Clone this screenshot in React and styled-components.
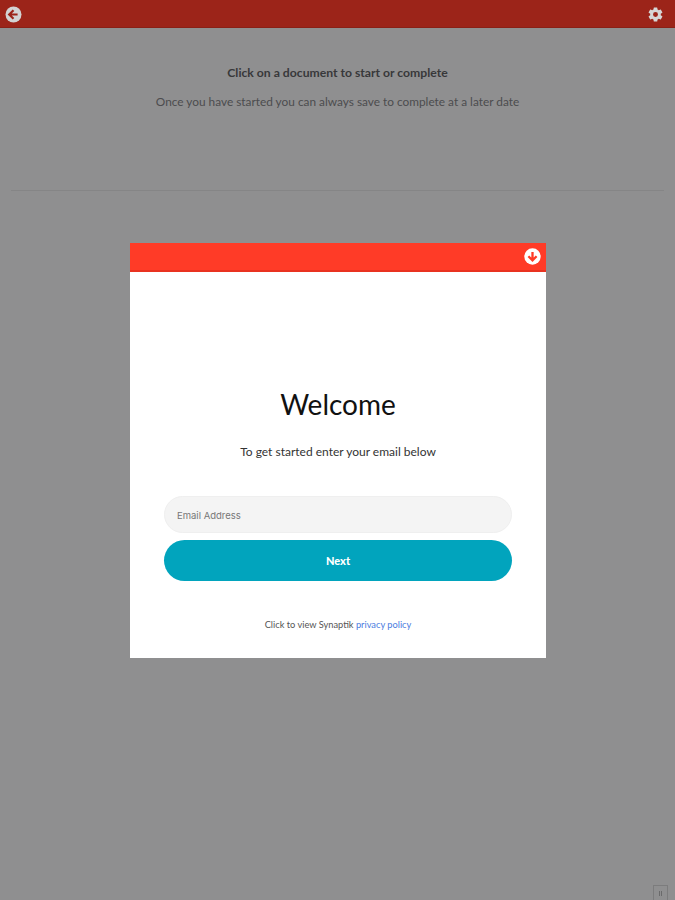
import React from "react";
import styled, { createGlobalStyle } from "styled-components";

const GlobalStyle = createGlobalStyle`
  html, body {
    margin: 0;
    padding: 0;
    background: #8f8f90;
    font-family: Lato, "Liberation Sans", sans-serif;
  }
`;

const Page = styled.div`
  position: relative;
  width: 675px;
  height: 900px;
  overflow: hidden;
  background: #8f8f90;
`;

const TopBar = styled.header`
  height: 28px;
  background: #9c2419;
  border-bottom: 1px solid #8a2016;
  box-sizing: border-box;
  display: flex;
  align-items: center;
  justify-content: space-between;
  padding: 1px 11px 0 5px;
`;

const Intro = styled.section`
  height: 163px;
  margin: 0 11px;
  box-sizing: border-box;
  border-bottom: 1px solid #858586;
  padding-top: 37px;
  text-align: center;
`;

const IntroTitle = styled.div`
  font-size: 12.2px;
  line-height: 16px;
  font-weight: 700;
  color: #38383a;
`;

const IntroText = styled.div`
  font-size: 11.85px;
  line-height: 16px;
  margin-top: 13px;
  color: #4c4c4e;
`;

const Modal = styled.div`
  position: absolute;
  left: 130px;
  top: 243px;
  width: 416px;
  height: 415px;
  background: #fff;
  display: flex;
  flex-direction: column;
`;

const ModalBar = styled.div`
  height: 28.5px;
  box-sizing: border-box;
  background: #ff3b27;
  border-bottom: 2px solid #e93320;
  display: flex;
  align-items: center;
  justify-content: flex-end;
  padding: 1px 5px 0 0;
`;

const ModalBody = styled.div`
  flex: 1;
  display: flex;
  flex-direction: column;
  align-items: center;
  padding: 0 34px;
`;

const Title = styled.h1`
  margin: 100px 0 0;
  font-size: 28px;
  line-height: 64px;
  font-weight: 400;
  color: #111;
`;

const Subtitle = styled.p`
  margin: 8.5px 0 0;
  font-size: 12px;
  line-height: 16px;
  color: #333;
`;

const EmailInput = styled.input`
  display: block;
  width: 100%;
  height: 37px;
  margin-top: 36px;
  box-sizing: border-box;
  padding: 2px 12px 0;
  border: 1px solid #efefef;
  border-radius: 19px;
  background: #f4f4f4;
  font-family: Inter, "Open Sans", sans-serif;
  font-size: 9.5px;
  outline: none;

  &::placeholder {
    color: #777;
    opacity: 1;
  }
`;

const NextButton = styled.button`
  display: block;
  width: 100%;
  height: 41px;
  margin-top: 7px;
  border: none;
  border-radius: 21px;
  background: #01a4bd;
  color: #fff;
  font-family: Lato, sans-serif;
  font-size: 11px;
  font-weight: 900;
`;

const Policy = styled.p`
  margin: 37px 0 0;
  font-size: 9.25px;
  line-height: 13px;
  color: #555;
`;

const PolicyLink = styled.a`
  color: #4a7be0;
  text-decoration: none;
`;

const ResizeHandle = styled.div`
  position: absolute;
  right: 7px;
  bottom: 0;
  width: 15px;
  height: 15px;
  box-sizing: border-box;
  border: 1px solid #7c7c7d;
  border-bottom: none;
  display: flex;
  align-items: center;
  justify-content: center;
  gap: 1px;
`;

const HandleTick = styled.span`
  width: 1px;
  height: 5px;
  background: #6a6a6b;
`;

const BackIcon = () => (
  <svg width="17" height="17" viewBox="0 0 17 17">
    <circle cx="8.5" cy="8.5" r="8" fill="#d3d3d3" />
    <path
      d="M8.5 4.2 4.2 8.5l4.3 4.3M4.6 8.5h8"
      fill="none"
      stroke="#9c2419"
      strokeWidth="2.2"
    />
  </svg>
);

const GearIcon = () => (
  <svg width="17" height="17" viewBox="0 0 24 24">
    <path
      fill="#d6d6d6"
      fillRule="evenodd"
      d="M19.43 12.98c.04-.32.07-.64.07-.98s-.03-.66-.07-.98l2.11-1.65a.5.5 0 0 0 .12-.64l-2-3.46a.5.5 0 0 0-.61-.22l-2.49 1a7.3 7.3 0 0 0-1.69-.98l-.38-2.65A.49.49 0 0 0 14 2h-4a.49.49 0 0 0-.49.42l-.38 2.65c-.61.25-1.17.59-1.69.98l-2.49-1a.5.5 0 0 0-.61.22l-2 3.46a.49.49 0 0 0 .12.64l2.11 1.65c-.04.32-.07.65-.07.98s.03.66.07.98l-2.11 1.65a.5.5 0 0 0-.12.64l2 3.46c.12.22.39.3.61.22l2.49-1c.52.4 1.08.73 1.69.98l.38 2.65c.03.24.24.42.49.42h4c.25 0 .46-.18.49-.42l.38-2.65c.61-.25 1.17-.59 1.69-.98l2.49 1c.23.09.49 0 .61-.22l2-3.46a.5.5 0 0 0-.12-.64l-2.11-1.65ZM12 15.5a3.5 3.5 0 1 1 0-7 3.5 3.5 0 0 1 0 7Z"
    />
  </svg>
);

const DownIcon = () => (
  <svg width="17" height="17" viewBox="0 0 17 17">
    <circle cx="8.5" cy="8.5" r="8.2" fill="#fff" />
    <path
      d="M4.4 8.2 8.5 12.3l4.1-4.1M8.5 11.8V4"
      fill="none"
      stroke="#ff3b27"
      strokeWidth="2.3"
    />
  </svg>
);

export default function App() {
  return (
    <Page>
      <GlobalStyle />
      <TopBar>
        <BackIcon />
        <GearIcon />
      </TopBar>
      <Intro>
        <IntroTitle>Click on a document to start or complete</IntroTitle>
        <IntroText>Once you have started you can always save to complete at a later date</IntroText>
      </Intro>
      <Modal>
        <ModalBar>
          <DownIcon />
        </ModalBar>
        <ModalBody>
          <Title>Welcome</Title>
          <Subtitle>To get started enter your email below</Subtitle>
          <EmailInput placeholder="Email Address" />
          <NextButton>Next</NextButton>
          <Policy>
            Click to view Synaptik <PolicyLink href="#">privacy policy</PolicyLink>
          </Policy>
        </ModalBody>
      </Modal>
      <ResizeHandle>
        <HandleTick />
        <HandleTick />
      </ResizeHandle>
    </Page>
  );
}
